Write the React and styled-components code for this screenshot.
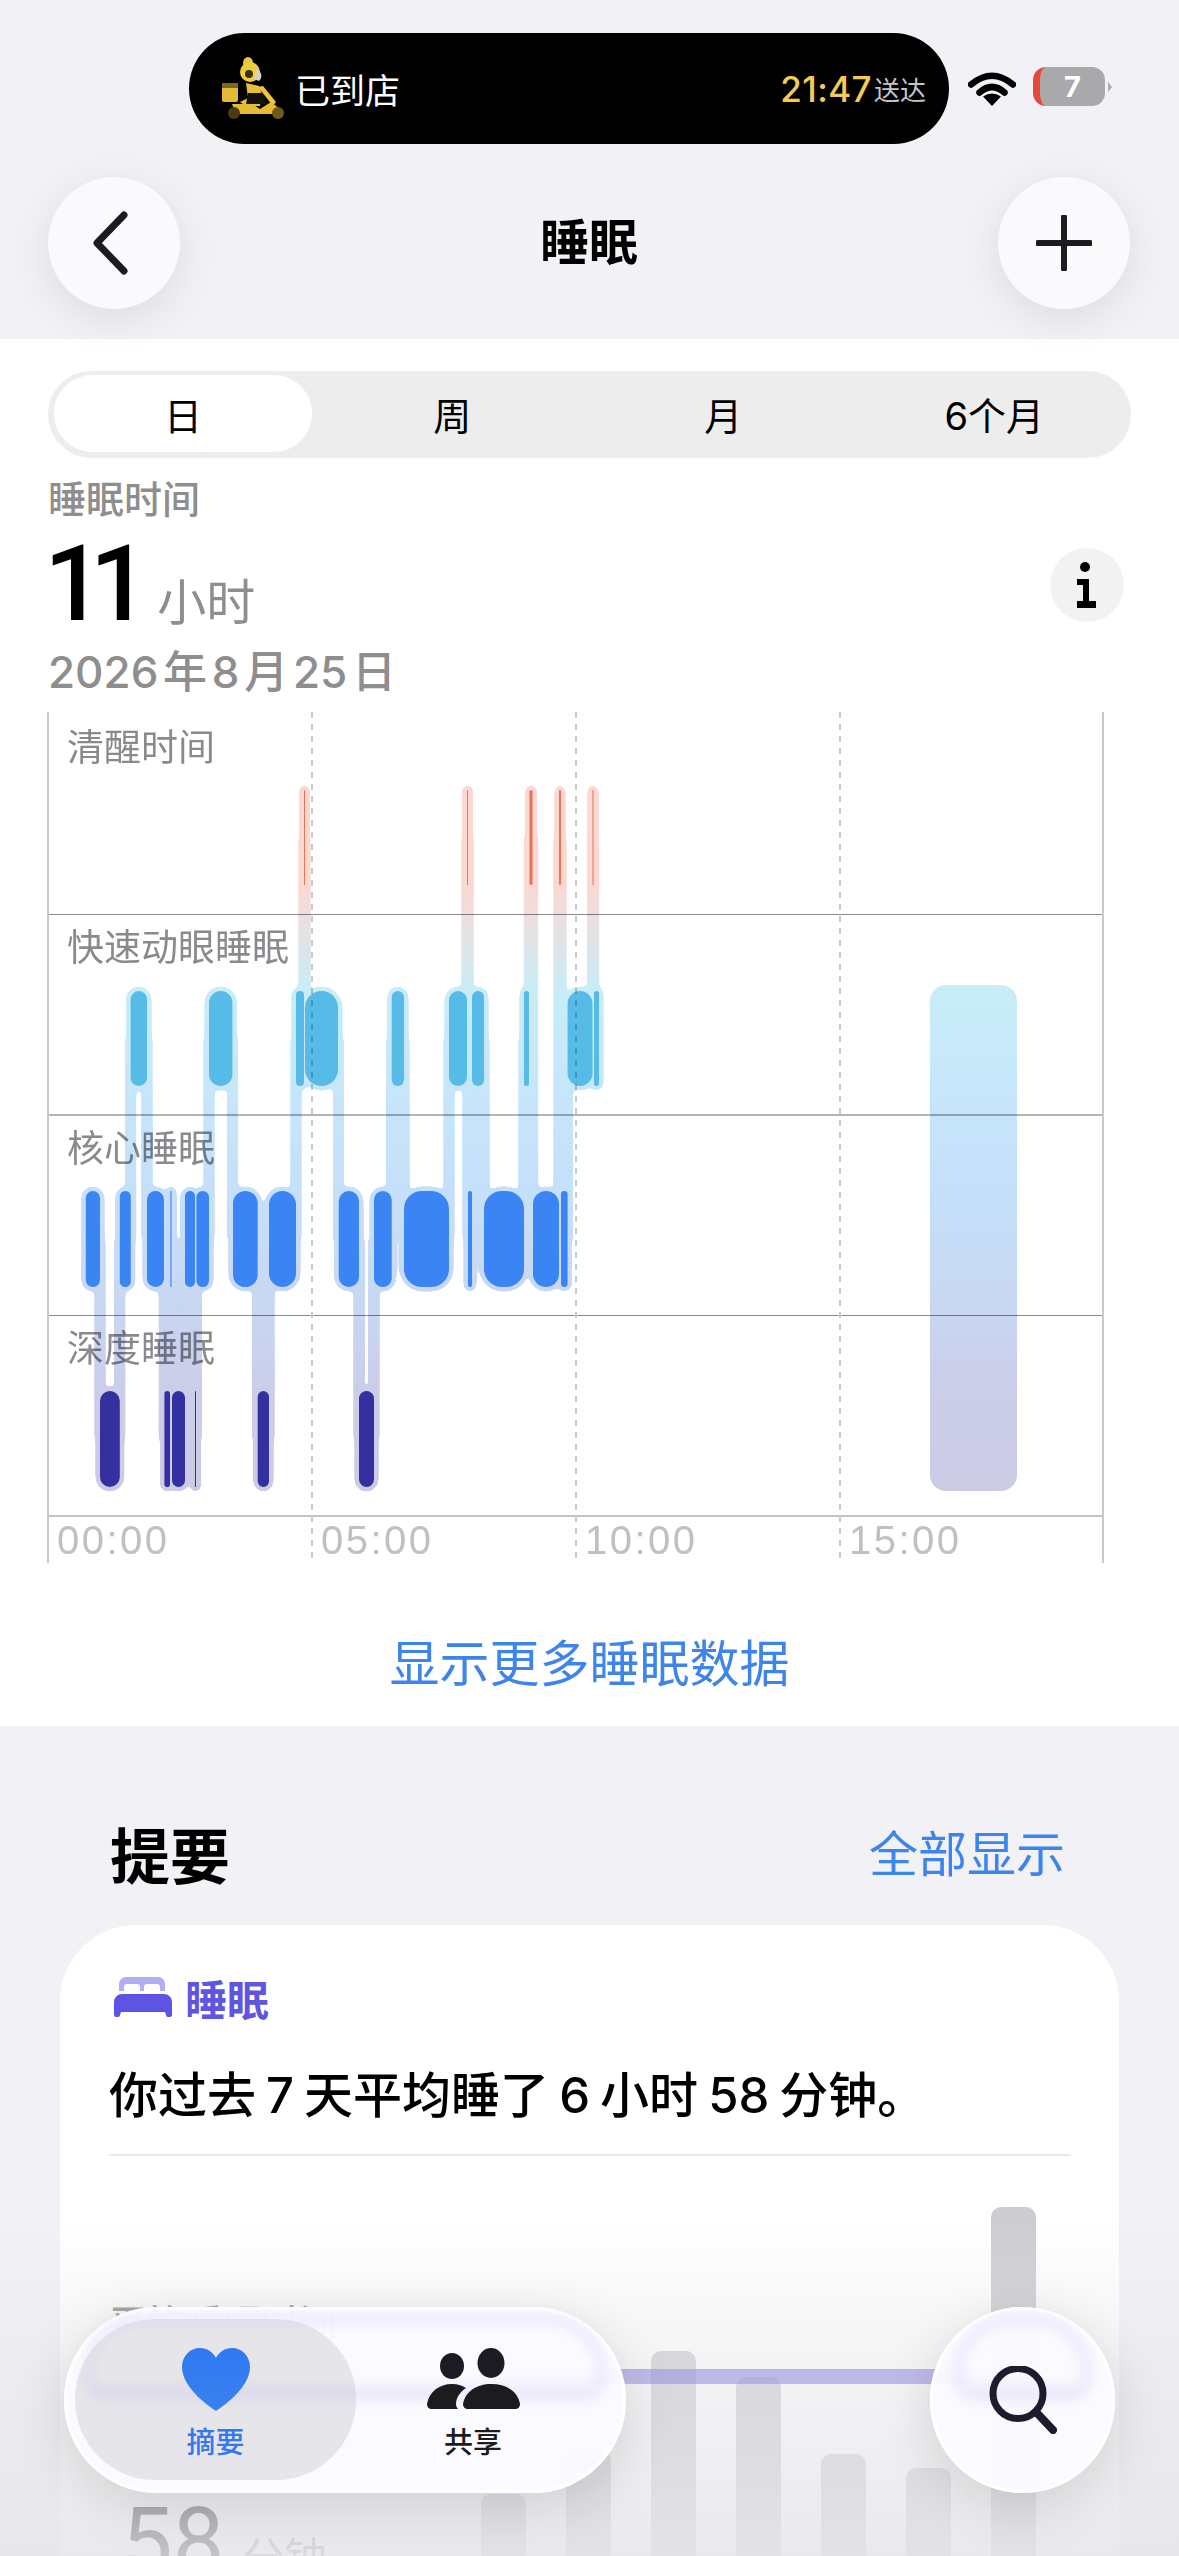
import styled, { createGlobalStyle } from 'styled-components'

const FONT = `Inter, "Noto Sans CJK SC", "Noto Sans", sans-serif`
const BLUE = '#3d85ea'

const GlobalStyle = createGlobalStyle`
  html, body { margin: 0; padding: 0; background: #f2f2f6; }
  * { box-sizing: border-box; }
  body { font-family: ${FONT}; color: #000; }
`

// sleep stages, x positions are page pixels
const ROWS = {
  awake: { top: 790, bottom: 885, fill: '#e8735c' },
  rem: { top: 991, bottom: 1086, fill: '#56bbe6' },
  core: { top: 1191, bottom: 1287, fill: '#3b84f3' },
  deep: { top: 1391, bottom: 1487, fill: '#35309f' },
}

const SEGMENTS = [
  ['core', 85.8, 100], ['deep', 100, 119.8], ['core', 119.8, 130.8], ['rem', 130.6, 147],
  ['core', 147, 164], ['deep', 164.4, 170], ['core', 170.4, 171.5], ['deep', 172, 185],
  ['core', 185, 195], ['deep', 195, 196], ['core', 196.4, 209], ['rem', 209, 232.4],
  ['core', 233, 257.7], ['deep', 257.7, 269], ['core', 269, 296], ['rem', 296, 304],
  ['awake', 304, 305], ['rem', 305, 338], ['core', 338.7, 359], ['deep', 359, 374],
  ['core', 374, 391.7], ['rem', 391.7, 404], ['core', 404, 449], ['rem', 449, 467],
  ['awake', 467, 468], ['core', 468, 472], ['rem', 472, 484], ['core', 484, 524],
  ['rem', 524, 529], ['awake', 529.5, 532.5], ['core', 533, 559], ['awake', 559, 561],
  ['core', 561, 567.6], ['rem', 567.6, 592.5], ['awake', 592.5, 593.5], ['rem', 594, 599],
]

const WEEK_BARS = [147, 190, 290, 264, 187, 173, 434]

const Page = styled.div`
  position: relative;
  width: 1179px;
  height: 2556px;
  overflow: hidden;
  background: #f1f1f6;
`

const Header = styled.header`
  position: relative;
  z-index: 2;
  height: 339px;
  padding-top: 33px;
  background: #f2f2f6;
`

const StatusRow = styled.div`
  display: flex;
  align-items: center;
  height: 111px;
  padding-left: 189px;
`

const Island = styled.div`
  display: flex;
  align-items: center;
  width: 760px;
  height: 111px;
  padding: 0 23px 0 33px;
  border-radius: 56px;
  background: #000;
`

const IslandText = styled.span`
  margin-left: 9px;
  font-size: 35px;
  color: #fff;
`

const Eta = styled.span`
  margin-left: auto;
  font-size: 35px;
  font-weight: 500;
  letter-spacing: 0.4px;
  color: #f2cc55;
`

const EtaUnit = styled.span`
  margin-left: 2px;
  font-size: 26px;
  color: #c4c4c4;
`

const WifiIcon = styled.svg`
  margin: 0 0 0 19px;
`

const Battery = styled.div`
  display: flex;
  align-items: center;
  justify-content: center;
  width: 72px;
  height: 39px;
  margin: -4px 0 0 17px;
  border-left: 7px solid #e8483a;
  border-radius: 13px;
  background: #a9a9ab;
  font-size: 29px;
  font-weight: 700;
  color: #fff;
`

const BatteryNub = styled.div`
  width: 0;
  height: 0;
  margin: -4px 0 0 3px;
  border-top: 5px solid transparent;
  border-bottom: 5px solid transparent;
  border-left: 4px solid #aaaaac;
`

const NavRow = styled.div`
  display: flex;
  align-items: center;
  justify-content: space-between;
  margin-top: 33px;
  padding: 0 49px 0 48px;
`

const RoundButton = styled.button`
  display: flex;
  align-items: center;
  justify-content: center;
  width: 132px;
  height: 132px;
  padding: 0;
  border: 0;
  border-radius: 50%;
  background: #fafafd;
  box-shadow: 0 10px 44px rgba(0, 0, 0, 0.09);
`

const Title = styled.h1`
  margin: 0;
  font-size: 49px;
  font-weight: 700;
  line-height: 60px;
`

const DaySection = styled.section`
  height: 1387px;
  padding: 32px 48px 0;
  background: #fff;
`

const Segmented = styled.div`
  display: grid;
  grid-template-columns: 258px repeat(3, 1fr);
  column-gap: 9.5px;
  height: 87px;
  padding: 6px;
  border-radius: 44px;
  background: #ededee;
`

const SegmentItem = styled.div`
  display: flex;
  align-items: center;
  justify-content: center;
  margin-top: -2px;
  border-radius: 38px;
  background: ${({ $active }) => ($active ? '#fff' : 'transparent')};
  font-size: 38px;
  color: #000;
`

const MetricLabel = styled.div`
  margin-top: 18px;
  font-size: 38px;
  font-weight: 500;
  line-height: 46px;
  color: #8e8e8e;
`

const MetricRow = styled.div`
  display: flex;
  align-items: center;
  justify-content: space-between;
  height: 109px;
  margin-top: 8px;
  padding-right: 7px;
`

const MetricValue = styled.div`
  display: flex;
  align-items: baseline;
`

const BigNumber = styled.span`
  margin-left: -4px;
  font-family: Roboto, sans-serif;
  font-size: 105px;
  font-weight: 500;
  line-height: 109px;
  letter-spacing: -14px;
`

const BigUnit = styled.span`
  margin: 0 0 -2px 22px;
  font-size: 49px;
  color: #8e8e8e;
`

const InfoButton = styled.div`
  display: flex;
  align-items: center;
  justify-content: center;
  width: 74px;
  height: 74px;
  border-radius: 50%;
  background: #f2f2f2;
`

const DateLine = styled.div`
  margin-top: 5px;
  font-size: 44px;
  font-weight: 500;
  line-height: 56px;
  word-spacing: -7px;
  color: #8e8e8e;
`

const Chart = styled.div`
  position: relative;
  display: grid;
  grid-template-rows: 203px 201px 200px 201px 46px;
  width: 1056px;
  height: 851px;
  margin-top: 12px;
  isolation: isolate;
`

const Lane = styled.div`
  padding: 11px 0 0 19px;
  border-bottom: ${({ $w }) => $w}px solid ${({ $line }) => $line};
  font-size: 37px;
  line-height: 44px;
  color: #8a8a8e;

  &:first-child {
    padding-top: 14px;
  }
`

const Axis = styled.div`
  display: grid;
  grid-template-columns: repeat(4, 264px);
`

const AxisLabel = styled.span`
  padding: 3px 0 0 9px;
  font-family: "Liberation Sans", sans-serif;
  font-size: 40px;
  line-height: 40px;
  letter-spacing: 2.5px;
  color: #c0c0c0;
`

const GridOverlay = styled.div`
  position: absolute;
  inset: 0;
  display: grid;
  grid-template-columns: repeat(4, 264px);
  pointer-events: none;
`

const GridColumn = styled.div`
  position: relative;

  &::before {
    content: '';
    position: absolute;
    top: 0;
    bottom: 0;
    left: -1px;
    width: 2px;
    background: ${({ $solid }) =>
      $solid
        ? '#c8c8c8'
        : 'repeating-linear-gradient(to bottom, #cbcbcb 0 6px, transparent 6px 12px)'};
  }
`

const EndLine = styled.div`
  position: absolute;
  top: 0;
  right: 0;
  bottom: 0;
  width: 2px;
  background: #c8c8c8;
`

const Hypnogram = styled.svg`
  position: absolute;
  inset: 0;
  mix-blend-mode: multiply;
  pointer-events: none;
`

const MoreLink = styled.div`
  margin-top: 71px;
  font-size: 50px;
  line-height: 60px;
  text-align: center;
  color: ${BLUE};
`

const SummaryHeader = styled.div`
  display: flex;
  align-items: center;
  justify-content: space-between;
  height: 80px;
  margin-top: 86px;
  padding: 0 114px 0 110px;
`

const SummaryTitle = styled.h2`
  margin: 0;
  font-size: 60px;
  font-weight: 700;
`

const ShowAll = styled.span`
  margin-bottom: 4px;
  font-size: 49px;
  color: ${BLUE};
`

const Card = styled.article`
  height: 760px;
  margin: 33px 60px 0;
  padding: 47px 48px 0 49px;
  border-radius: 76px 76px 0 0;
  background: #fff;
`

const CardTag = styled.div`
  display: flex;
  align-items: center;
  height: 50px;
  font-size: 42px;
  font-weight: 600;
  color: #5e56e0;
`

const TagIcon = styled.svg`
  margin: 0 13px 0 5px;
`

const Sentence = styled.p`
  margin: 0;
  padding: 39px 0 23px;
  border-bottom: 2px solid #e9e9eb;
  font-size: 49px;
  font-weight: 500;
  line-height: 70px;
  word-spacing: -3px;
`

const CardBody = styled.div`
  display: flex;
  align-items: flex-start;
`

const Stat = styled.div`
  width: 372px;
  padding-top: 144px;
`

const StatLabel = styled.div`
  font-size: 38px;
  font-weight: 500;
  line-height: 46px;
  color: #8e8e8e;
`

const StatValue = styled.div`
  display: flex;
  align-items: baseline;
  margin: 146px 0 0 12px;
  font-family: Roboto, sans-serif;
  font-size: 92px;
  line-height: 100px;
  color: #000;
`

const StatUnit = styled.span`
  margin-left: 18px;
  font-family: ${FONT};
  font-size: 42px;
  color: #8e8e8e;
`

const WeekChart = styled.div`
  position: relative;
  display: flex;
  align-items: flex-end;
  gap: 40px;
  height: 485px;
`

const WeekBar = styled.div`
  width: 45px;
  height: ${({ $h }) => $h}px;
  border-radius: 10px 10px 0 0;
  background: #cdcdd1;
`

const AverageLine = styled.div`
  position: absolute;
  top: 213px;
  left: 0;
  right: 0;
  height: 15px;
  background: rgba(92, 80, 214, 0.62);
`

const BottomFade = styled.div`
  position: absolute;
  right: 0;
  bottom: 0;
  left: 0;
  height: 340px;
  background: linear-gradient(
    to bottom,
    rgba(230, 230, 234, 0) 0%,
    rgba(230, 230, 234, 0.45) 45%,
    rgba(230, 230, 234, 0.86) 100%
  );
  pointer-events: none;
`

const TabBar = styled.nav`
  position: absolute;
  bottom: 63px;
  left: 64px;
  display: flex;
  justify-content: space-between;
  width: 1051px;
`

const Glass = styled.div`
  position: relative;
  display: flex;
  height: 186px;
  border-radius: 93px;
  background: rgba(251, 250, 254, 0.97);
  box-shadow:
    0 12px 54px rgba(0, 0, 0, 0.13),
    inset 0 0 0 3px #fff;

  &::after {
    content: '';
    position: absolute;
    top: 8px;
    right: ${({ $ring }) => $ring}px;
    left: ${({ $ring }) => $ring}px;
    height: 62px;
    border: 9px solid rgba(198, 192, 244, 0.3);
    border-bottom-width: 15px;
    border-radius: 58px 58px 22px 22px;
    filter: blur(6px);
    pointer-events: none;
  }
`

const TabPill = styled(Glass)`
  width: 562px;
  padding: 12px 11px 13px;
`

const SearchPill = styled(Glass)`
  align-items: center;
  justify-content: center;
  width: 185px;
`

const Tab = styled.div`
  display: flex;
  flex-direction: column;
  align-items: center;
  width: ${({ $w }) => $w}px;
  padding-top: 29px;
  border-radius: 80px;
  background: ${({ $active }) => ($active ? '#e6e6ea' : 'transparent')};
`

const TabIcon = styled.svg`
  position: relative;
  z-index: 1;
  display: block;
`

const TabLabel = styled.span`
  margin-top: 12px;
  font-size: 29px;
  font-weight: 500;
  line-height: 40px;
  color: ${({ $active }) => ($active ? '#3478f0' : '#1c1c1e')};
`

const ChevronIcon = styled.svg`
  margin-right: 6px;
`

const Rider = () => (
  <svg width="64" height="64" viewBox="0 0 64 64">
    <ellipse cx="26" cy="6" rx="5" ry="6" fill="#e9c53c" />
    <circle cx="28" cy="15" r="10" fill="#efcb42" />
    <circle cx="27" cy="17" r="4" fill="#3a2f12" />
    <path d="M34 12a7 7 0 0 1 3 12l-5-2z" fill="#d8d2b8" />
    <rect x="0" y="26" width="16" height="19" rx="2" fill="#e4bb38" />
    <rect x="0" y="26" width="16" height="5" fill="#7b6724" />
    <path d="M24 26l13 3 3 8-2 12H24l-6-4 8-4z" fill="#e7c03b" />
    <path d="M26 36h14l5 11H24z" fill="#15120a" />
    <path d="M36 30l5-1 13 16-3 4z" fill="#eec63e" />
    <path d="M10 47h20l8 5 11-7 9 7 2 5H14z" fill="#e5bb37" />
    <circle cx="12" cy="56" r="6" fill="#4a3b14" />
    <circle cx="56" cy="56" r="6" fill="#6f5a1e" />
  </svg>
)

const Wifi = () => (
  <WifiIcon width="48" height="35" viewBox="0 0 48 35" fill="none">
    <path d="M3 13.5Q24 -4 45 13.5" stroke="#000" strokeWidth="6.5" strokeLinecap="round" />
    <path d="M11.5 21.5Q24 10.5 36.5 21.5" stroke="#000" strokeWidth="6.5" strokeLinecap="round" />
    <path d="M24 35L15 25.5Q24 19.5 33 25.5Z" fill="#000" />
  </WifiIcon>
)

const Chevron = () => (
  <ChevronIcon width="40" height="64" viewBox="0 0 40 64" fill="none">
    <path d="M33 4L6 32L33 60" stroke="#1c1c1e" strokeWidth="7" strokeLinecap="round" strokeLinejoin="round" />
  </ChevronIcon>
)

const Plus = () => (
  <svg width="56" height="56" viewBox="0 0 56 56" fill="none">
    <path d="M28 2V54M2 28H54" stroke="#1c1c1e" strokeWidth="6" strokeLinecap="round" />
  </svg>
)

const InfoGlyph = () => (
  <svg width="22" height="46" viewBox="0 0 22 46">
    <circle cx="9" cy="5" r="5" fill="#000" />
    <path d="M1 17H13V39H20V46H1V39H7V23H1Z" fill="#000" />
  </svg>
)

const Bed = () => (
  <TagIcon width="58" height="40" viewBox="0 0 58 40">
    <path
      d="M5 14V7a7 7 0 0 1 7-7H44a7 7 0 0 1 7 7V14H46V10a3 3 0 0 0-3-3H33a3 3 0 0 0-3 3V14H26V10a3 3 0 0 0-3-3H13a3 3 0 0 0-3 3V14Z"
      fill="#b3adf4"
    />
    <path
      d="M0 25a8 8 0 0 1 8-8H50a8 8 0 0 1 8 8V38a2 2 0 0 1-2 2H54a2 2 0 0 1-2-2L51 35H7L6 38a2 2 0 0 1-2 2H2a2 2 0 0 1-2-2Z"
      fill="#5e54e3"
    />
  </TagIcon>
)

const Heart = () => (
  <TabIcon width="68" height="63" viewBox="0 0 68 63">
    <defs>
      <linearGradient id="heartFill" x1="0" y1="0" x2="0" y2="1">
        <stop offset="0" stopColor="#2f7af2" />
        <stop offset="1" stopColor="#3a80ee" />
      </linearGradient>
    </defs>
    <path
      d="M34 63C30 60 0 41 0 19C0 8 8 0 18 0C25 0 31 4 34 10C37 4 43 0 50 0C60 0 68 8 68 19C68 41 38 60 34 63Z"
      fill="url(#heartFill)"
    />
  </TabIcon>
)

const People = () => (
  <TabIcon width="93" height="63" viewBox="0 0 93 63">
    <ellipse cx="64" cy="15" rx="13.5" ry="15" fill="#1c1c24" />
    <ellipse cx="25" cy="18" rx="12" ry="13" fill="#1c1c24" />
    <path d="M36 56C38 44 49 36 64.5 36C80 36 91 44 93 56C93 59 91 61 88 61H41C38 61 36 59 36 56Z" fill="#1c1c1e" />
    <path d="M0 56C2 44 12 36 25 36C31 36 36 38 39 40C33 44 29 50 29 56C29 58 30 60 31 61H5C2 61 0 59 0 56Z" fill="#1c1c1e" />
  </TabIcon>
)

const Magnifier = () => (
  <TabIcon width="68" height="68" viewBox="0 0 68 68" fill="none">
    <circle cx="29" cy="27.5" r="25" stroke="#1c1c2c" strokeWidth="7" />
    <path d="M47 46L64 64" stroke="#1c1c2c" strokeWidth="8" strokeLinecap="round" />
  </TabIcon>
)

const SleepChart = () => {
  const centre = (stage) => (ROWS[stage].top + ROWS[stage].bottom) / 2

  return (
    <Hypnogram width="1056" height="851" viewBox="48 712 1056 851">
      <defs>
        <linearGradient id="halo" gradientUnits="userSpaceOnUse" x1="0" y1="785" x2="0" y2="1491">
          <stop offset="0" stopColor="#fbd8d2" />
          <stop offset="0.14" stopColor="#fbd8d2" />
          <stop offset="0.19" stopColor="#ecdfe0" />
          <stop offset="0.29" stopColor="#c8edf7" />
          <stop offset="0.43" stopColor="#c6e6fa" />
          <stop offset="0.57" stopColor="#c5e0fa" />
          <stop offset="0.72" stopColor="#c8d8f3" />
          <stop offset="0.86" stopColor="#cbcde9" />
          <stop offset="1" stopColor="#cccbe4" />
        </linearGradient>
        <filter id="merge" filterUnits="userSpaceOnUse" x="48" y="712" width="1056" height="851" colorInterpolationFilters="sRGB">
          <feGaussianBlur in="SourceGraphic" stdDeviation="2.5" result="soft" />
          <feColorMatrix in="soft" values="1 0 0 0 0  0 1 0 0 0  0 0 1 0 0  0 0 0 16 -6" result="goo" />
          <feComposite in="SourceGraphic" in2="goo" operator="atop" />
        </filter>
      </defs>

      <g filter="url(#merge)" fill="url(#halo)">
        {SEGMENTS.map(([stage, x0, x1], i) => {
          const width = Math.max(x1 - x0 + 8, 10)
          const left = (x0 + x1) / 2 - width / 2
          return (
            <rect
              key={i}
              x={left}
              y={ROWS[stage].top - 4}
              width={width}
              height={ROWS[stage].bottom - ROWS[stage].top + 8}
              rx={Math.min(width / 2, 22)}
            />
          )
        })}
        {SEGMENTS.slice(1).map(([stage, x0], i) => {
          const [prev, , prevEnd] = SEGMENTS[i]
          const top = Math.min(centre(prev), centre(stage))
          const bottom = Math.max(centre(prev), centre(stage))
          return <rect key={i} x={(prevEnd + x0) / 2 - 5} y={top} width="10" height={bottom - top} />
        })}
      </g>

      {SEGMENTS.map(([stage, x0, x1], i) => (
        <rect
          key={i}
          x={x0}
          y={ROWS[stage].top}
          width={x1 - x0}
          height={ROWS[stage].bottom - ROWS[stage].top}
          rx={Math.min((x1 - x0) / 2, 18)}
          fill={ROWS[stage].fill}
        />
      ))}

      <rect x="930" y="985" width="87" height="506" rx="16" fill="url(#halo)" />
    </Hypnogram>
  )
}

export default function App() {
  return (
    <>
      <GlobalStyle />
      <Page>
        <Header>
          <StatusRow>
            <Island>
              <Rider />
              <IslandText>已到店</IslandText>
              <Eta>21:47</Eta>
              <EtaUnit>送达</EtaUnit>
            </Island>
            <Wifi />
            <Battery>7</Battery>
            <BatteryNub />
          </StatusRow>
          <NavRow>
            <RoundButton><Chevron /></RoundButton>
            <Title>睡眠</Title>
            <RoundButton><Plus /></RoundButton>
          </NavRow>
        </Header>

        <DaySection>
          <Segmented>
            <SegmentItem $active>日</SegmentItem>
            <SegmentItem>周</SegmentItem>
            <SegmentItem>月</SegmentItem>
            <SegmentItem>6个月</SegmentItem>
          </Segmented>
          <MetricLabel>睡眠时间</MetricLabel>
          <MetricRow>
            <MetricValue>
              <BigNumber>11</BigNumber>
              <BigUnit>小时</BigUnit>
            </MetricValue>
            <InfoButton><InfoGlyph /></InfoButton>
          </MetricRow>
          <DateLine>2026 年 8 月 25 日</DateLine>

          <Chart>
            <Lane $line="#8a8a8a" $w={1}>清醒时间</Lane>
            <Lane $line="#b4b4b4" $w={2}>快速动眼睡眠</Lane>
            <Lane $line="#8a8a8a" $w={1}>核心睡眠</Lane>
            <Lane $line="#c2c2c2" $w={2}>深度睡眠</Lane>
            <Axis>
              <AxisLabel>00:00</AxisLabel>
              <AxisLabel>05:00</AxisLabel>
              <AxisLabel>10:00</AxisLabel>
              <AxisLabel>15:00</AxisLabel>
            </Axis>
            <GridOverlay>
              <GridColumn $solid />
              <GridColumn />
              <GridColumn />
              <GridColumn />
            </GridOverlay>
            <EndLine />
            <SleepChart />
          </Chart>

          <MoreLink>显示更多睡眠数据</MoreLink>
        </DaySection>

        <SummaryHeader>
          <SummaryTitle>提要</SummaryTitle>
          <ShowAll>全部显示</ShowAll>
        </SummaryHeader>

        <Card>
          <CardTag><Bed />睡眠</CardTag>
          <Sentence>你过去 7 天平均睡了 6 小时 58 分钟。</Sentence>
          <CardBody>
            <Stat>
              <StatLabel>平均睡眠时间</StatLabel>
              <StatValue>58<StatUnit>分钟</StatUnit></StatValue>
            </Stat>
            <WeekChart>
              {WEEK_BARS.map((h, i) => <WeekBar key={i} $h={h} />)}
              <AverageLine />
            </WeekChart>
          </CardBody>
        </Card>

        <BottomFade />

        <TabBar>
          <TabPill $ring={20}>
            <Tab $active $w={281}>
              <Heart />
              <TabLabel $active>摘要</TabLabel>
            </Tab>
            <Tab $w={234}>
              <People />
              <TabLabel>共享</TabLabel>
            </Tab>
          </TabPill>
          <SearchPill $ring={24}>
            <Magnifier />
          </SearchPill>
        </TabBar>
      </Page>
    </>
  )
}
